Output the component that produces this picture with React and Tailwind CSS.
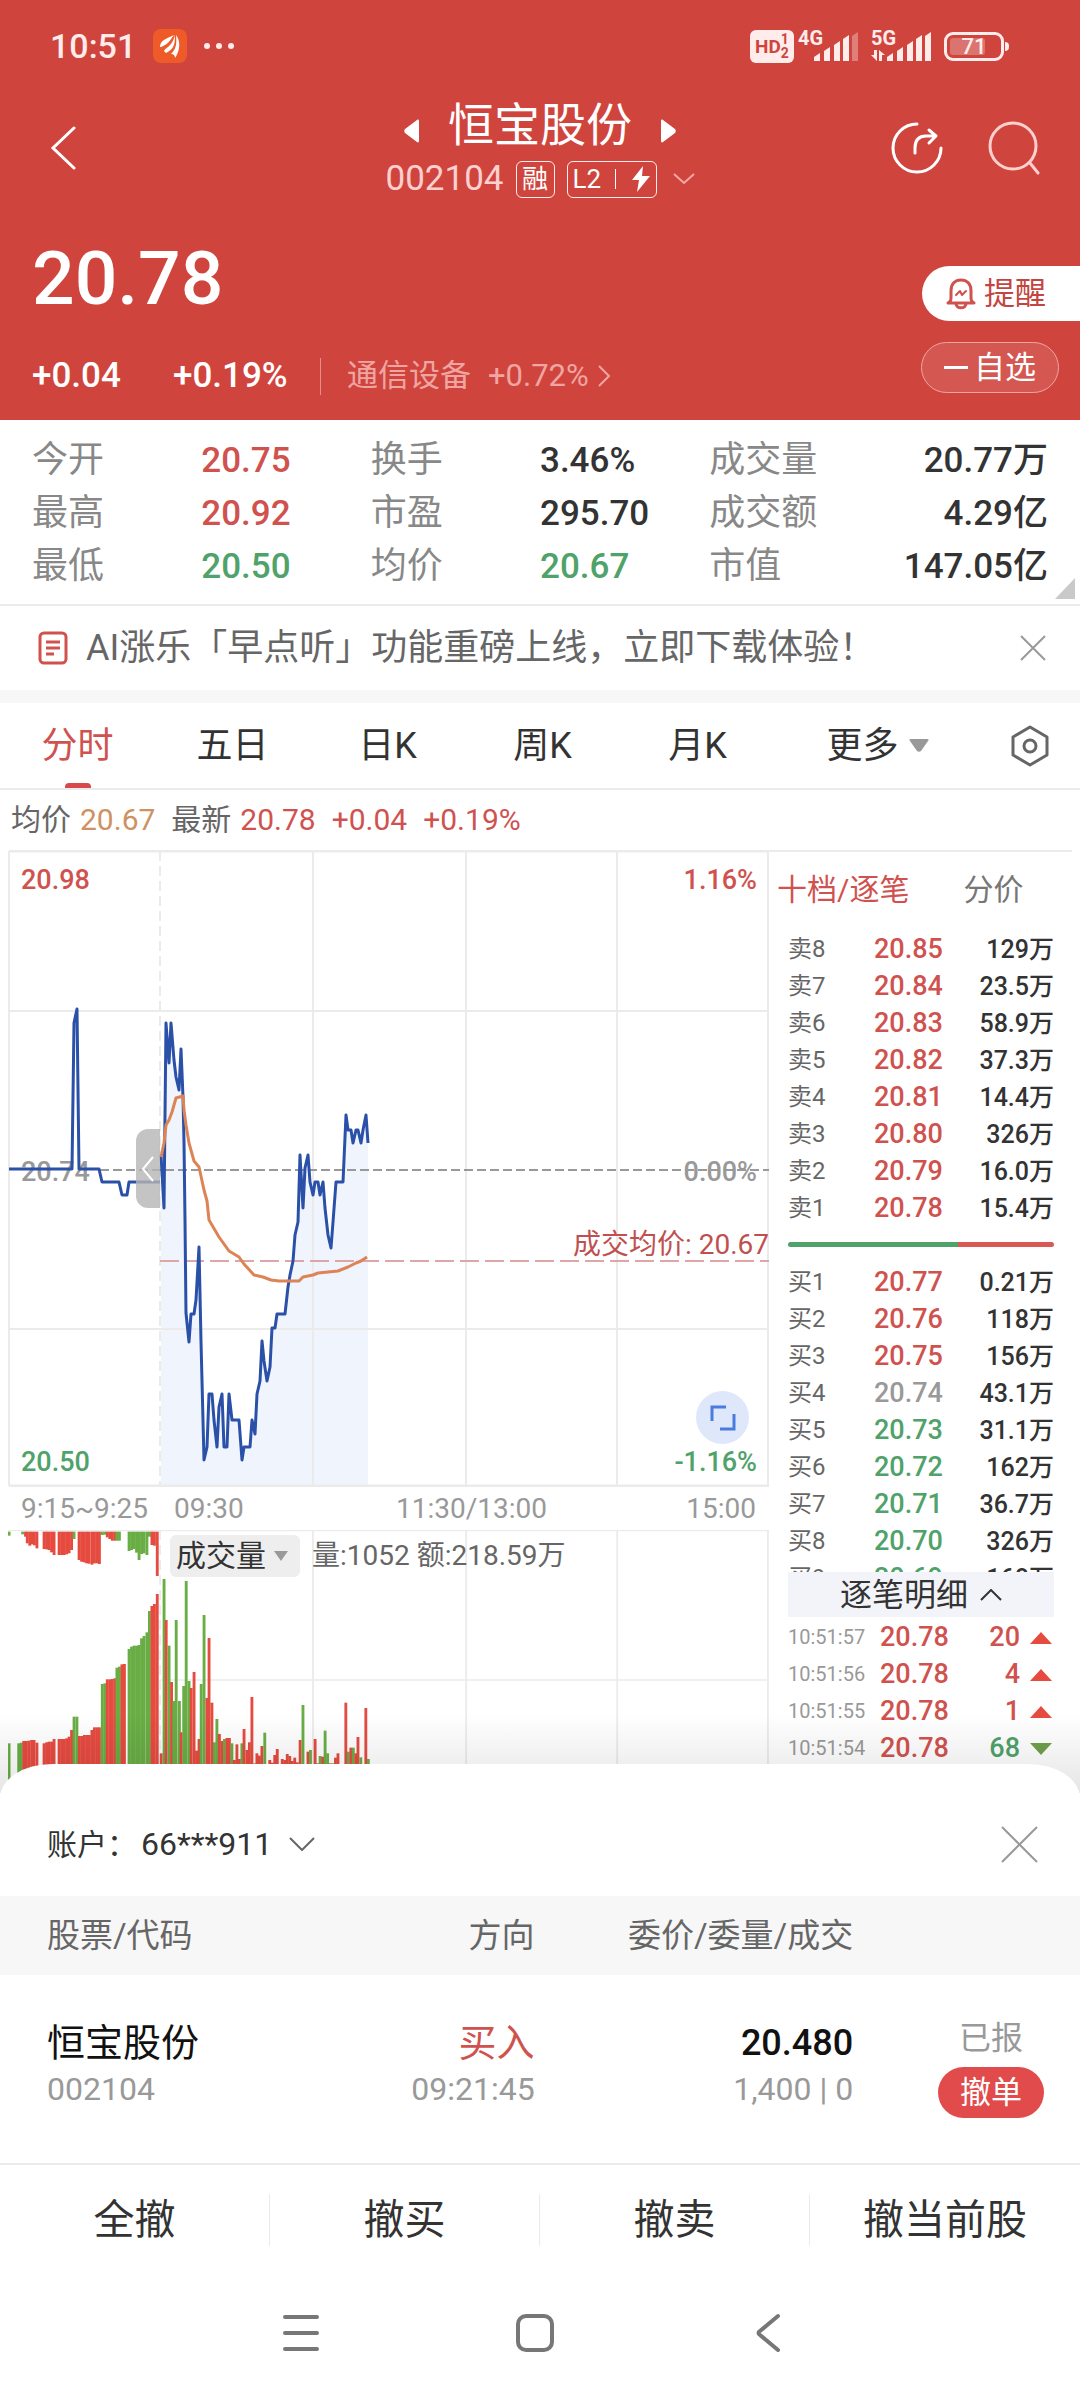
import { useState } from 'react'

const RED = 'text-[#d0524f]'
const GREEN = 'text-[#4fa269]'
const DARK = 'text-[#333333]'

const quoteStats = [
    ['今开', '20.75', RED], ['换手', '3.46%', DARK], ['成交量', '20.77万', DARK],
    ['最高', '20.92', RED], ['市盈', '295.70', DARK], ['成交额', '4.29亿', DARK],
    ['最低', '20.50', GREEN], ['均价', '20.67', GREEN], ['市值', '147.05亿', DARK],
]

const tabs = ['分时', '五日', '日K', '周K', '月K']

const sells = [
    ['卖8', '20.85', '129万'], ['卖7', '20.84', '23.5万'], ['卖6', '20.83', '58.9万'], ['卖5', '20.82', '37.3万'],
    ['卖4', '20.81', '14.4万'], ['卖3', '20.80', '326万'], ['卖2', '20.79', '16.0万'], ['卖1', '20.78', '15.4万'],
]

const buys = [
    ['买1', '20.77', '0.21万'], ['买2', '20.76', '118万'], ['买3', '20.75', '156万'], ['买4', '20.74', '43.1万'],
    ['买5', '20.73', '31.1万'], ['买6', '20.72', '162万'], ['买7', '20.71', '36.7万'], ['买8', '20.70', '326万'],
    ['买9', '20.69', '168万'],
]

const trades = [
    ['10:51:57', '20.78', '20', 'up'], ['10:51:56', '20.78', '4', 'up'],
    ['10:51:55', '20.78', '1', 'up'], ['10:51:54', '20.78', '68', 'down'],
]

// 9:15 - 9:25 集合竞价
const auctionLine = '9,1169 72,1169 74,1023 77,1009 79,1169 99,1169 102,1182 119,1182 122,1195 127,1195 129,1182 160,1182'
const priceLine =
    '161,1155 164,1208 166,1023 169,1063 171,1023 174,1060 176,1077 179,1090 181,1049 183,1097 184,1142 185,1220 186,1313 ' +
    '189,1342 191,1314 194,1314 196,1300 199,1247 201,1341 204,1460 207,1447 209,1394 212,1394 214,1420 217,1447 219,1407 ' +
    '222,1394 224,1447 227,1447 229,1394 232,1420 239,1420 242,1460 244,1447 250,1447 252,1420 255,1434 257,1394 260,1381 ' +
    '262,1341 264,1361 267,1381 270,1367 272,1328 275,1328 277,1314 285,1314 288,1287 290,1275 293,1261 295,1235 298,1222 ' +
    '300,1155 303,1208 305,1168 308,1155 310,1182 313,1195 315,1182 318,1182 320,1195 323,1182 325,1208 328,1235 331,1248 ' +
    '333,1222 336,1182 343,1182 346,1115 348,1130 351,1130 353,1143 356,1130 358,1130 361,1143 363,1130 366,1115 368,1143'
const avgLine =
    '161,1157 164,1143 166,1125 169,1120 172,1112 176,1098 183,1096 184,1110 186,1125 189,1143 194,1161 199,1167 204,1190 ' +
    '207,1201 209,1220 219,1237 229,1251 239,1257 244,1264 254,1275 263,1277 271,1280 279,1281 299,1281 303,1277 313,1275 ' +
    '318,1273 338,1271 348,1267 356,1263 361,1261 367,1257'

// [x, 顶部, 颜色]
const auctionBars = [
    [25, 730, 'g'], [52, 730, 'g'], [59, 728, 'g'], [66, 723, 'r'], [73, 723, 'r'], [80, 722, 'r'], [88, 720, 'r'], [95, 720, 'r'],
    [103, 728, 'r'], [123, 730, 'r'], [130, 727, 'r'], [137, 725, 'r'], [144, 725, 'r'], [151, 717, 'r'], [165, 717, 'r'],
    [172, 717, 'r'], [179, 717, 'r'], [186, 715, 'r'], [193, 710, 'r'], [200, 690, 'r'], [207, 650, 'g'], [215, 650, 'g'],
    [222, 708, 'r'], [229, 708, 'r'], [236, 705, 'r'], [243, 705, 'r'], [250, 705, 'r'], [257, 690, 'r'], [264, 682, 'r'],
    [271, 682, 'r'], [278, 682, 'r'], [286, 552, 'g'], [293, 550, 'g'], [300, 538, 'r'], [307, 538, 'r'], [314, 537, 'r'],
    [321, 535, 'r'], [327, 503, 'g'], [334, 500, 'g'], [341, 493, 'r'], [348, 492, 'r'], [361, 447, 'g'], [368, 440, 'g'],
    [375, 437, 'g'], [382, 437, 'g'], [389, 435, 'g'], [396, 415, 'g'], [403, 408, 'g'], [411, 397, 'g'], [418, 333, 'g'],
    [425, 318, 'r'], [432, 312, 'r'], [440, 282, 'r'],
]
const unmatchedBars = [
    [25, 107, 'g'], [63, 103, 'g'], [71, 110, 'r'], [76, 130, 'r'], [83, 137, 'r'], [89, 133, 'r'], [96, 136, 'r'], [103, 145, 'r'],
    [123, 147, 'r'], [130, 148, 'r'], [137, 150, 'r'], [144, 157, 'r'], [151, 165, 'r'], [165, 165, 'r'], [172, 165, 'r'],
    [179, 165, 'r'], [186, 163, 'r'], [193, 160, 'r'], [200, 150, 'r'], [207, 117, 'g'], [221, 180, 'r'], [228, 185, 'r'],
    [235, 187, 'r'], [242, 190, 'r'], [249, 191, 'r'], [257, 194, 'r'], [264, 190, 'r'], [271, 190, 'r'], [278, 192, 'r'],
    [286, 105, 'g'], [293, 104, 'g'], [300, 112, 'r'], [307, 117, 'r'], [314, 122, 'r'], [321, 122, 'r'], [327, 122, 'g'],
    [334, 122, 'g'], [361, 153, 'g'], [368, 150, 'g'], [375, 147, 'g'], [382, 158, 'g'], [389, 180, 'g'], [396, 162, 'g'],
    [403, 160, 'g'], [411, 165, 'g'], [418, 110, 'g'], [425, 135, 'r'], [432, 137, 'r'], [440, 228, 'r'],
]
const tradeBars = [
    [451, 760, 'r'], [459, 237, 'g'], [465, 360, 'r'], [473, 437, 'g'], [480, 546, 'r'], [486, 603, 'g'], [493, 360, 'g'],
    [502, 603, 'g'], [507, 697, 'r'], [514, 558, 'g'], [521, 243, 'g'], [529, 543, 'g'], [535, 564, 'r'], [543, 516, 'r'],
    [550, 752, 'r'], [557, 717, 'r'], [563, 552, 'g'], [571, 345, 'g'], [579, 594, 'r'], [585, 414, 'r'], [593, 608, 'r'],
    [600, 727, 'g'], [607, 657, 'g'], [614, 702, 'r'], [621, 723, 'r'], [628, 717, 'g'], [635, 714, 'r'], [642, 714, 'r'],
    [649, 730, 'g'], [656, 780, 'r'], [663, 733, 'r'], [670, 777, 'r'], [677, 730, 'g'], [683, 687, 'r'], [691, 750, 'r'],
    [698, 727, 'r'], [705, 591, 'r'], [713, 790, 'g'], [719, 760, 'r'], [726, 767, 'r'], [733, 738, 'r'], [741, 698, 'g'],
    [748, 792, 'g'], [755, 780, 'r'], [762, 788, 'r'], [769, 765, 'r'], [776, 747, 'r'], [790, 777, 'r'], [797, 780, 'r'],
    [804, 762, 'r'], [811, 768, 'r'], [818, 783, 'r'], [825, 773, 'r'], [832, 787, 'r'], [840, 720, 'r'], [848, 615, 'g'],
    [862, 755, 'r'], [869, 750, 'g'], [882, 717, 'r'], [889, 790, 'r'], [896, 768, 'g'], [903, 770, 'r'], [910, 692, 'g'],
    [917, 760, 'g'], [925, 790, 'r'], [932, 790, 'g'], [939, 773, 'r'], [946, 760, 'r'], [955, 792, 'r'], [968, 608, 'r'],
    [975, 755, 'g'], [982, 743, 'r'], [989, 743, 'g'], [996, 760, 'r'], [1002, 711, 'r'], [1010, 772, 'g'], [1017, 793, 'r'],
    [1024, 624, 'r'], [1031, 777, 'g'],
]

const barColor = { r: '#e64b40', g: '#69ad45' }

const priceColor = (price) => {
    if (price === '20.74') return 'text-[#999999]'
    return Number(price) > 20.74 ? RED : GREEN
}

const Signal = ({ weak }) => (
    <svg width="45" height="29" viewBox="0 0 45 29" fill="#ffeceb" aria-hidden="true">
        <path d="M0 25l6-4v8H0z" />
        <path d="M10 19l6-4v14h-6z" />
        <path d="M20 13l6-4v20h-6z" />
        <path d="M29 7l6-4v26h-6z" />
        <path d="M38 4l6-4v29h-6z" opacity={weak ? 0.35 : 1} />
    </svg>
)

const StatusBar = () => (
    <div className="flex h-[92px] items-center justify-between pl-[50px] pr-[76px] text-[#ffeceb]">
        <div className="flex items-center">
            <span className="w-[103px] text-[34px] font-medium leading-10">10:51</span>
            <svg width="34" height="34" viewBox="0 0 34 34" aria-hidden="true">
                <rect width="34" height="34" rx="8" fill="#ee5a28" />
                <path d="M7 18c0-6 5-8 14-12-4 5-5 9-13 12z" fill="#fff" />
                <path d="M11 22c2-4 8-4 11-16 0 7 0 14-9 18z" fill="#fff" />
                <path d="M18 25c5-5 6-10 5-19 5 6 4 16-1 23 0-2-1-4-4-4z" fill="#fff" />
            </svg>
            <svg className="ml-4" width="32" height="8" viewBox="0 0 32 8" fill="#ffeceb" aria-hidden="true">
                <circle cx="4" cy="4" r="3" />
                <circle cx="16" cy="4" r="3" />
                <circle cx="28" cy="4" r="3" />
            </svg>
        </div>
        <div className="flex items-center">
            <div className="flex h-[33px] w-[44px] items-center justify-center rounded-md bg-[#ffeceb] font-bold text-[#cf453e]">
                <span className="text-[19px] leading-none">HD</span>
                <span className="flex flex-col text-[14px] leading-[14px]">
                    <span>1</span>
                    <span>2</span>
                </span>
            </div>
            <div className="relative ml-5 h-[29px]">
                <span className="absolute -left-4 -top-1 text-[20px] font-bold leading-5">4G</span>
                <Signal weak />
            </div>
            <div className="relative ml-7 h-[29px]">
                <span className="absolute -left-4 -top-1 text-[20px] font-bold leading-5">5G</span>
                <svg className="absolute -left-4 top-[18px]" width="14" height="11" viewBox="0 0 14 11" fill="#ffeceb" aria-hidden="true">
                    <path d="M3 0h3v11L0 5h3zM8 11V0l6 5h-3v6z" />
                </svg>
                <Signal />
            </div>
            <div className="relative ml-3 flex h-[29px] w-[60px] items-center rounded-[9px] border-3 border-[#ffeceb] p-[3px]">
                <div className="h-full w-[35px] rounded-[3px] bg-white/25" />
                <span className="absolute inset-0 text-center text-[22px] font-medium leading-6">71</span>
                <span className="absolute -right-2 top-[7px] h-[9px] w-1 rounded-r-full bg-[#ffeceb]" />
            </div>
        </div>
    </div>
)

const TitleBar = () => (
    <div className="flex h-[112px] items-center justify-between pl-[50px] pr-[39px]">
        <button aria-label="返回" className="flex w-[139px]">
            <svg width="27" height="44" viewBox="0 0 27 44" fill="none" stroke="#fff" strokeWidth="3" strokeLinecap="round">
                <path d="M24 2L3 22l21 20" />
            </svg>
        </button>
        <div className="flex flex-col items-center self-start">
            <div className="flex items-center">
                <button aria-label="上一只" className="pt-3">
                    <svg width="16" height="24" viewBox="0 0 16 24" fill="#fff"><path d="M15 2v20c0 1-1 2-2 1L1 14c-1-1-1-3 0-4L13 1c1-1 2 0 2 1z" /></svg>
                </button>
                <h1 className="mx-7 text-[46px] leading-[66px] text-white">恒宝股份</h1>
                <button aria-label="下一只" className="pt-3">
                    <svg width="16" height="24" viewBox="0 0 16 24" fill="#fff"><path d="M1 2v20c0 1 1 2 2 1l12-9c1-1 1-3 0-4L3 1C2 0 1 1 1 2z" /></svg>
                </button>
            </div>
            <div className="mt-[2px] flex h-[38px] items-center">
                <span className="text-[35px] leading-[38px] text-[#ffd0ce]">002104</span>
                <span className="ml-3 flex h-[37px] w-[39px] items-center justify-center rounded-md border border-[#ffeceb] text-[26px] leading-none text-white">融</span>
                <span className="ml-3 flex h-[37px] w-[90px] items-center justify-between rounded-md border border-[#ffeceb] px-[5px] text-[26px] leading-none text-white">
                    L2
                    <span className="h-5 w-px bg-white" />
                    <svg width="20" height="26" viewBox="0 0 20 26" fill="#fff" aria-hidden="true"><path d="M12 0L1 14h7l-2 12L19 10h-8z" /></svg>
                </span>
                <svg className="ml-4" width="22" height="12" viewBox="0 0 22 12" fill="none" stroke="#f5a9a6" strokeWidth="2" aria-hidden="true">
                    <path d="M1 1l10 9L21 1" />
                </svg>
            </div>
        </div>
        <div className="flex gap-11">
            <button aria-label="分享">
                <svg width="52" height="52" viewBox="0 0 52 52" fill="none" stroke="#fff" strokeWidth="3" strokeLinecap="round" strokeLinejoin="round">
                    <path d="M26 2A24 24 0 1 0 50 26" />
                    <path d="M24 31v-5c0-8 4-12 11-12h9M38 8l7 6-7 7" />
                </svg>
            </button>
            <button aria-label="搜索">
                <svg width="54" height="54" viewBox="0 0 54 54" fill="none" stroke="#ffd0ce" strokeWidth="3" strokeLinecap="round">
                    <circle cx="26" cy="25" r="23" />
                    <path d="M43 42l8 10" />
                </svg>
            </button>
        </div>
    </div>
)

const Header = () => (
    <header className="bg-[#cf453e]">
        <StatusBar />
        <TitleBar />
        <div className="flex h-[216px] justify-between pl-8 text-white">
            <div className="pt-[34px]">
                <div className="text-[75px] font-medium leading-[80px]">20.78</div>
                <div className="mt-[39px] flex h-[38px] items-center text-[35px] font-medium leading-[38px]">
                    <span className="w-[141px]">+0.04</span>
                    <span className="w-[147px]">+0.19%</span>
                    <span className="mr-[26px] h-[37px] w-px bg-[#e58e8a]" />
                    <a href="#sector" className="flex items-center gap-[17px] text-[31px] font-normal text-[#f0a5a2]">
                        <span>通信设备</span>
                        <span className="flex items-center gap-2">
                            +0.72%
                            <svg width="14" height="22" viewBox="0 0 14 22" fill="none" stroke="#f0a5a2" strokeWidth="2" aria-hidden="true"><path d="M2 1l10 10L2 21" /></svg>
                        </span>
                    </a>
                </div>
            </div>
            <div className="flex flex-col items-end gap-[21px] pt-[62px]">
                <button className="flex h-[55px] items-center gap-2 rounded-l-full bg-white pl-6 pr-[34px] text-[31px] leading-none text-[#c4453f]">
                    <svg width="30" height="32" viewBox="0 0 30 32" fill="none" stroke="#d0524f" strokeWidth="3" strokeLinejoin="round" strokeLinecap="round" aria-hidden="true">
                        <path d="M2 25c3-2 3-3 3-6v-6C5 6 9 2 15 2s10 4 10 11v6c0 3 0 4 3 6z" />
                        <path d="M10 26c1 5 9 5 10 0" />
                        <path d="M10 17l4-4 2 4 4-4" strokeWidth="2" />
                    </svg>
                    提醒
                </button>
                <button className="mr-[21px] flex h-[51px] w-[138px] items-center justify-center gap-[6px] rounded-full border border-[#f0a5a2] bg-white/10 text-[31px] leading-none">
                    <span className="h-[3px] w-6 bg-white" />
                    自选
                </button>
            </div>
        </div>
    </header>
)

const Stats = () => (
    <section className="relative border-b-2 border-[#ebebeb] px-8 pb-[11px] pt-[14px]">
        <dl className="grid grid-cols-3 text-[36px] leading-[53px]">
            {quoteStats.map(([label, value, color], i) => (
                <div key={label} className="grid grid-cols-2">
                    <dt className="text-[#888888]">{label}</dt>
                    <dd className={`whitespace-nowrap text-[35px] font-medium ${color} ${i % 3 === 2 ? 'flex justify-end' : ''}`}>{value}</dd>
                </div>
            ))}
        </dl>
        <svg className="absolute bottom-[5px] right-[5px]" width="20" height="21" viewBox="0 0 20 21" fill="#c9c9c9" aria-hidden="true">
            <path d="M20 0v21H0z" />
        </svg>
    </section>
)

const Notice = ({ onClose }) => (
    <div className="flex h-[84px] items-center pl-[38px] pr-[34px]">
        <svg width="30" height="34" viewBox="0 0 30 34" fill="none" stroke="#d0524f" strokeWidth="3" aria-hidden="true">
            <rect x="2" y="2" width="26" height="30" rx="4" />
            <path d="M8 11h14M8 17h14M8 23h8" />
        </svg>
        <p className="ml-[18px] flex-1 whitespace-nowrap text-[36px] leading-[54px] text-[#666666]">AI涨乐「早点听」功能重磅上线，立即下载体验！</p>
        <button aria-label="关闭" onClick={onClose}>
            <svg width="26" height="26" viewBox="0 0 26 26" stroke="#999" strokeWidth="2"><path d="M1 1l24 24M25 1L1 25" /></svg>
        </button>
    </div>
)

const Tabs = ({ active, onChange }) => (
    <nav className="flex h-[87px] border-b-2 border-[#ebebeb] text-[36px] leading-[86px] text-[#333333]">
        {tabs.map((tab) => (
            <button
                key={tab}
                onClick={() => onChange(tab)}
                className={`relative basis-[155px] ${tab === active ? RED : ''}`}
            >
                {tab}
                {tab === active && <span className="absolute bottom-0 left-1/2 h-[5px] w-[26px] -translate-x-1/2 rounded-t bg-[#d84a4a]" />}
            </button>
        ))}
        <button className="flex flex-1 items-center justify-center gap-[10px]">
            更多
            <svg width="20" height="13" viewBox="0 0 20 13" fill="#999" aria-hidden="true"><path d="M2 0h16c2 0 2 1 1 2l-7 10c-1 1-3 1-4 0L1 2C0 1 0 0 2 0z" /></svg>
        </button>
        <button aria-label="设置" className="flex basis-[100px] items-center justify-center">
            <svg width="40" height="42" viewBox="0 0 40 42" fill="none" stroke="#666" strokeWidth="3" strokeLinejoin="round">
                <path d="M20 2l17 10v18L20 40 3 30V12z" />
                <circle cx="20" cy="21" r="6" />
            </svg>
        </button>
    </nav>
)

const PriceChart = () => (
    <div className="relative text-[28px] leading-8">
        <svg className="block h-[637px] w-full" viewBox="8 850 761 637" preserveAspectRatio="none" fill="none" aria-hidden="true">
            <polygon points={`161,1486 ${priceLine} 368,1486`} fill="#eff4fd" />
            <g stroke="#ebebeb" strokeWidth="2">
                <path d="M9 851H769M9 1486H769" strokeWidth="3" />
                <path d="M9 851V1486M313 851V1486M466 851V1486M617 851V1486M768 851V1486M9 1011H769M9 1329H769" />
                <path d="M160 851V1486" strokeDasharray="10 5" />
            </g>
            <path d="M160 1261H769" stroke="#dfa6a8" strokeWidth="2" strokeDasharray="19 6" />
        </svg>
        <span className={`absolute left-[13px] top-[14px] text-[27px] font-medium ${RED}`}>20.98</span>
        <span className={`absolute right-3 top-[14px] text-[27px] font-medium ${RED}`}>1.16%</span>
        <span className="absolute left-[13px] top-[306px] text-[27px] font-medium text-[#999999]">20.74</span>
        <span className="absolute right-3 top-[306px] text-[27px] font-medium text-[#999999]">0.00%</span>
        <span className={`absolute left-[13px] top-[596px] text-[27px] font-medium ${GREEN}`}>20.50</span>
        <span className={`absolute right-3 top-[596px] text-[27px] font-medium ${GREEN}`}>-1.16%</span>
        <span className="absolute right-0 top-[379px] text-[#c0504f]">成交均价: 20.67</span>
        <svg className="absolute inset-0 h-[637px] w-full" viewBox="8 850 761 637" preserveAspectRatio="none" fill="none" strokeLinejoin="round" strokeWidth="3" aria-hidden="true">
            <path d="M100 1170H769" stroke="#999" strokeWidth="2" strokeDasharray="9 4" />
            <polyline points={auctionLine} stroke="#2a50a8" />
            <polyline points={priceLine} stroke="#2a50a8" />
            <polyline points={avgLine} stroke="#dd8457" />
        </svg>
        <button aria-label="收起竞价" className="absolute left-[128px] top-[279px] flex h-[79px] w-6 items-center justify-center rounded-l-xl bg-[#b5b5b5]/80">
            <svg width="14" height="26" viewBox="0 0 14 26" fill="none" stroke="#fff" strokeWidth="2"><path d="M12 1L2 13l10 12" /></svg>
        </button>
        <button aria-label="全屏" className="absolute right-5 top-[541px] flex size-[53px] items-center justify-center rounded-full bg-[#dfe7fb]">
            <svg width="26" height="26" viewBox="0 0 26 26" fill="none" stroke="#4a7be0" strokeWidth="3"><path d="M2 16V2h14M24 9v15H10" /></svg>
        </button>
    </div>
)

const Bars = ({ data, from }) =>
    data.map(([x, y, c]) => (
        <rect key={x} x={x - 4} width="8" y={Math.min(y, from)} height={Math.abs(from - y)} fill={barColor[c]} />
    ))

const VolumeChart = () => (
    <div className="relative">
        {/* 竖向网格与上方分时图对齐 */}
        <svg className="block h-[263px] w-full" viewBox="22 90 2131 789" preserveAspectRatio="none" aria-hidden="true">
            <g stroke="#ebebeb" strokeWidth="5" fill="none">
                <path d="M22 91H2153M448 540H2153M876 90V879M1305 90V879M1728 90V879M2150 90V879" />
                <path d="M448 90V879" strokeDasharray="30 15" />
            </g>
            <Bars data={unmatchedBars} from={95} />
            <Bars data={auctionBars} from={850} />
            <Bars data={tradeBars} from={850} />
        </svg>
        <div className="absolute left-[162px] top-[5px] flex items-center gap-3">
            <button className="flex h-[42px] items-center gap-2 rounded-md bg-[#eeeeee] pl-[6px] pr-3 text-[30px] leading-none text-[#333333]">
                成交量
                <svg width="14" height="10" viewBox="0 0 14 10" fill="#999" aria-hidden="true"><path d="M0 0h14L7 10z" /></svg>
            </button>
            <span className="whitespace-nowrap text-[28px] leading-8 text-[#666666]">量:1052 额:218.59万</span>
        </div>
    </div>
)

const DepthTable = ({ label, rows }) => (
    <table className="w-full" aria-label={label}>
        <tbody>
            {rows.map(([level, price, volume]) => (
                <tr key={level} className="h-[37px] leading-[37px]">
                    <th scope="row" className="w-[86px] p-0 text-left text-[24px] font-normal text-[#666666]">{level}</th>
                    <td className={`p-0 text-[27px] font-medium ${priceColor(price)}`}>{price}</td>
                    <td className="p-0 text-right text-[25px] font-medium text-[#333333]">{volume}</td>
                </tr>
            ))}
        </tbody>
    </table>
)

const OrderBook = () => (
    <aside className="mr-2 border-t-2 border-[#ebebeb]">
        <div className="flex h-[79px] items-center gap-[54px] pb-1 pl-2 text-[30px] leading-none">
            <button className={RED}>十档/逐笔</button>
            <button className="text-[#777777]">分价</button>
        </div>
        <div className="pl-[19px] pr-[18px]">
            <DepthTable label="卖盘" rows={sells} />
            <div className="mb-[17px] mt-[15px] flex h-[5px] overflow-hidden rounded-full">
                <span className="w-[64%] bg-[#4fa269]" />
                <span className="flex-1 bg-[#d95a55]" />
            </div>
            <div className="h-[308px] overflow-hidden"><DepthTable label="买盘" rows={buys} /></div>
            <button className="mb-[2px] flex h-[45px] w-full items-center justify-center gap-3 bg-[#f2f4f9] text-[32px] leading-none text-[#333333]">
                逐笔明细
                <svg width="22" height="12" viewBox="0 0 22 12" fill="none" stroke="#333" strokeWidth="2" aria-hidden="true"><path d="M1 11L11 1l10 10" /></svg>
            </button>
            <table className="w-full" aria-label="逐笔明细">
                <tbody>
                    {trades.map(([time, price, qty, dir]) => (
                        <tr key={time} className="h-[37px] leading-[37px]">
                            <td className="w-[92px] p-0 text-[20px] text-[#999999]">{time}</td>
                            <td className={`p-0 text-[27px] font-medium ${RED}`}>{price}</td>
                            <td className={`p-0 text-right text-[27px] font-medium ${dir === 'up' ? RED : GREEN}`}>{qty}</td>
                            <td className="w-[34px] p-0">
                                <svg className="ml-auto mr-[2px]" width="22" height="12" viewBox="0 0 22 12" aria-hidden="true">
                                    {dir === 'up' ? <path d="M11 0l11 12H0z" fill="#e64b40" /> : <path d="M0 0h22L11 12z" fill="#6fa04c" />}
                                </svg>
                            </td>
                        </tr>
                    ))}
                </tbody>
            </table>
        </div>
    </aside>
)

const OrderSheet = () => (
    <section className="relative -mt-[29px] rounded-t-[52px_34px] bg-white">
        <div className="flex h-[132px] items-center justify-between pl-[47px] pr-[41px] pt-7">
            <button className="flex items-center gap-[17px] text-[30px] leading-[42px] text-[#333333]">
                <span>账户：<span className="ml-1 text-[32px]">66***911</span></span>
                <svg width="26" height="14" viewBox="0 0 26 14" fill="none" stroke="#666" strokeWidth="2" aria-hidden="true"><path d="M1 1l12 12L25 1" /></svg>
            </button>
            <button aria-label="关闭">
                <svg width="39" height="39" viewBox="0 0 39 39" stroke="#999" strokeWidth="2"><path d="M2 2l35 35M37 2L2 37" /></svg>
            </button>
        </div>
        <table className="w-full table-fixed">
            <thead>
                <tr className="h-[79px] bg-[#f7f7f7] text-[33px] text-[#666666]">
                    <th className="w-[28%] p-0 pl-[47px] text-left font-normal">股票/代码</th>
                    <th className="p-0 text-right font-normal">方向</th>
                    <th className="w-[29.5%] p-0 text-right font-normal">委价/委量/成交</th>
                    <th className="w-[21%] p-0"><span className="sr-only">状态</span></th>
                </tr>
            </thead>
            <tbody>
                <tr className="h-[188px] align-top">
                    <td className="p-0 pl-[47px] pt-[42px]">
                        <div className="whitespace-nowrap text-[38px] leading-[52px] text-[#111111]">恒宝股份</div>
                        <div className="text-[32px] leading-10 text-[#999999]">002104</div>
                    </td>
                    <td className="p-0 pt-[42px] text-right">
                        <div className={`text-[38px] leading-[52px] ${RED}`}>买入</div>
                        <div className="text-[32px] leading-10 text-[#999999]">09:21:45</div>
                    </td>
                    <td className="p-0 pt-[42px] text-right">
                        <div className="text-[36px] font-medium leading-[52px] text-[#111111]">20.480</div>
                        <div className="text-[32px] leading-10 text-[#999999]">1,400 | 0</div>
                    </td>
                    <td className="p-0 pr-[36px] pt-[42px]">
                        <div className="ml-auto flex w-[106px] flex-col items-center">
                            <span className="text-[32px] leading-[42px] text-[#999999]">已报</span>
                            <button className="mt-2 h-[51px] w-full rounded-full bg-[#e14b4b] text-[31px] leading-none text-white">撤单</button>
                        </div>
                    </td>
                </tr>
            </tbody>
        </table>
        <div className="grid grid-cols-4 divide-x divide-[#ebebeb] border-t-2 border-[#ebebeb] pt-[29px] text-[41px] leading-[52px] text-[#333333]">
            {['全撤', '撤买', '撤卖', '撤当前股'].map((action) => (
                <button key={action}>{action}</button>
            ))}
        </div>
    </section>
)

const SystemNav = () => (
    <nav className="flex h-[153px] items-center justify-center gap-[194px] pr-[10px] pt-5">
        <button aria-label="最近任务">
            <svg width="40" height="40" viewBox="0 0 40 40" stroke="#777" strokeWidth="4" strokeLinecap="round"><path d="M4 4h32M4 20h32M4 36h32" /></svg>
        </button>
        <button aria-label="主屏幕">
            <svg width="40" height="40" viewBox="0 0 40 40" fill="none" stroke="#777" strokeWidth="4"><rect x="3" y="3" width="34" height="34" rx="8" /></svg>
        </button>
        <button aria-label="后退">
            <svg width="40" height="40" viewBox="0 0 40 40" fill="none" stroke="#777" strokeWidth="4" strokeLinecap="round" strokeLinejoin="round"><path d="M29 3L11 18c-2 1-2 3 0 4l18 15" /></svg>
        </button>
    </nav>
)

const App = () => {
    const [activeTab, setActiveTab] = useState('分时')
    const [showNotice, setShowNotice] = useState(true)

    return (
        <div className="min-h-screen bg-white font-[Roboto,'Noto_Sans_CJK_SC',sans-serif]">
            <Header />
            <Stats />
            {showNotice && <Notice onClose={() => setShowNotice(false)} />}
            <div className="h-[13px] bg-[#f7f7f7]" />
            <Tabs active={activeTab} onChange={setActiveTab} />

            <main className="relative">
                <p className="flex h-[60px] items-center pl-[11px] text-[30px] leading-none text-[#666666]">
                    均价<span className="ml-[9px] text-[#cf9163]">20.67</span>
                    <span className="ml-4">最新</span>
                    <span className={`ml-[9px] flex gap-4 ${RED}`}>
                        <span>20.78</span>
                        <span>+0.04</span>
                        <span>+0.19%</span>
                    </span>
                </p>
                <div className="grid grid-cols-[761fr_311fr] pl-2">
                    <div className="min-w-0">
                        <PriceChart />
                        <div className="flex h-[43px] items-center px-[13px] text-[28px] leading-none text-[#999999]">
                            <span className="w-[153px]">9:15~9:25</span>
                            <span className="w-[222px]">09:30</span>
                            <span>11:30/13:00</span>
                            <span className="ml-auto">15:00</span>
                        </div>
                        <VolumeChart />
                    </div>
                    <OrderBook />
                </div>
                <div className="pointer-events-none absolute inset-x-0 bottom-0 h-20 bg-linear-to-b from-transparent to-black/10" />
            </main>

            <OrderSheet />
            <SystemNav />
        </div>
    )
}

export default App
